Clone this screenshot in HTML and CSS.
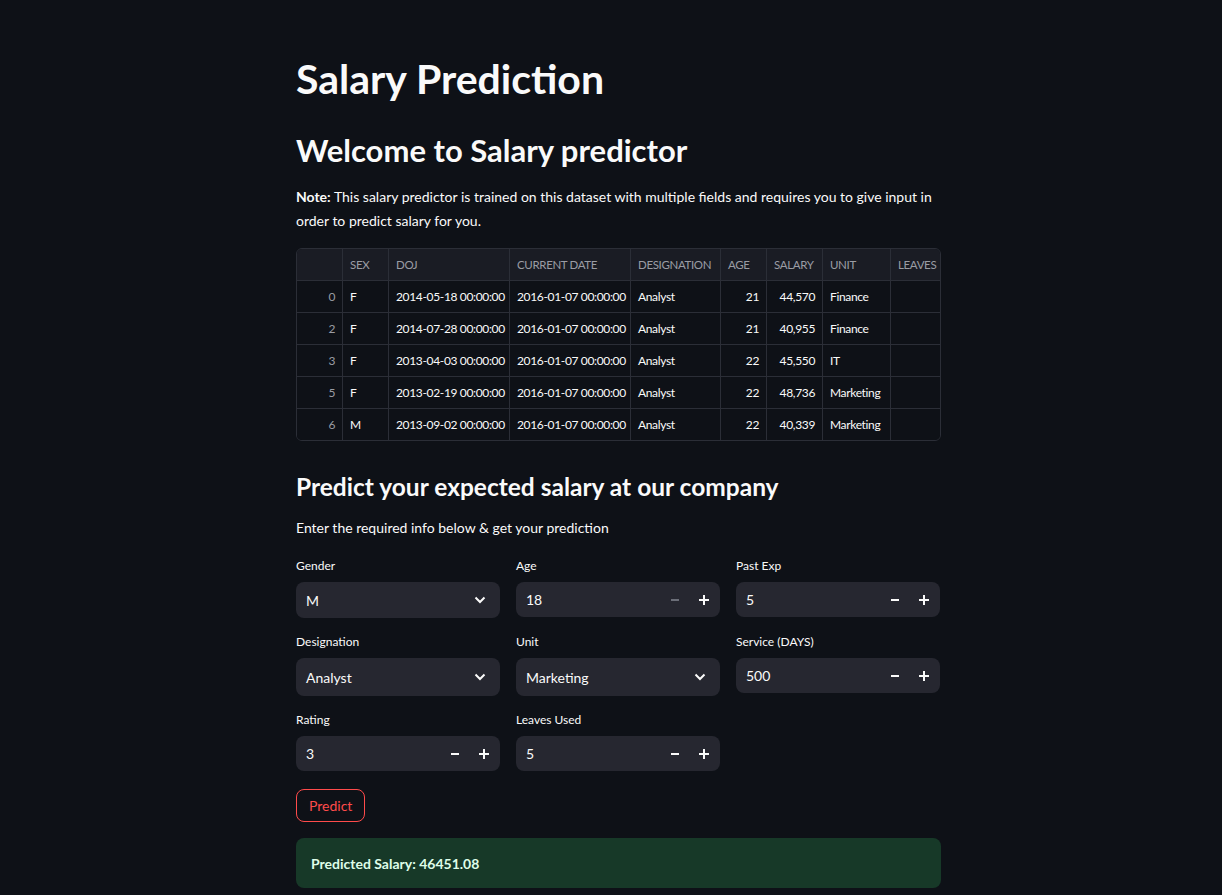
FILE: index.html
```html
<!DOCTYPE html>
<html lang="en">
<head>
<meta charset="utf-8">
<title>Salary Prediction</title>
<link rel="stylesheet" href="styles.css">
</head>
<body>
<main class="page">
  <h1 class="title">Salary Prediction</h1>
  <h2 class="subtitle">Welcome to Salary predictor</h2>
  <p class="note"><strong>Note:</strong> This salary predictor is trained on this dataset with multiple fields and requires you to give input in order to predict salary for you.</p>

  <div class="table">
    <div class="row head">
      <div class="cell"></div>
      <div class="cell">SEX</div>
      <div class="cell">DOJ</div>
      <div class="cell">CURRENT DATE</div>
      <div class="cell">DESIGNATION</div>
      <div class="cell">AGE</div>
      <div class="cell">SALARY</div>
      <div class="cell">UNIT</div>
      <div class="cell">LEAVES</div>
    </div>
    <div class="row">
      <div class="cell idx">0</div><div class="cell">F</div><div class="cell">2014-05-18 00:00:00</div><div class="cell">2016-01-07 00:00:00</div><div class="cell">Analyst</div><div class="cell num">21</div><div class="cell num">44,570</div><div class="cell">Finance</div><div class="cell"></div>
    </div>
    <div class="row">
      <div class="cell idx">2</div><div class="cell">F</div><div class="cell">2014-07-28 00:00:00</div><div class="cell">2016-01-07 00:00:00</div><div class="cell">Analyst</div><div class="cell num">21</div><div class="cell num">40,955</div><div class="cell">Finance</div><div class="cell"></div>
    </div>
    <div class="row">
      <div class="cell idx">3</div><div class="cell">F</div><div class="cell">2013-04-03 00:00:00</div><div class="cell">2016-01-07 00:00:00</div><div class="cell">Analyst</div><div class="cell num">22</div><div class="cell num">45,550</div><div class="cell">IT</div><div class="cell"></div>
    </div>
    <div class="row">
      <div class="cell idx">5</div><div class="cell">F</div><div class="cell">2013-02-19 00:00:00</div><div class="cell">2016-01-07 00:00:00</div><div class="cell">Analyst</div><div class="cell num">22</div><div class="cell num">48,736</div><div class="cell">Marketing</div><div class="cell"></div>
    </div>
    <div class="row last">
      <div class="cell idx">6</div><div class="cell">M</div><div class="cell">2013-09-02 00:00:00</div><div class="cell">2016-01-07 00:00:00</div><div class="cell">Analyst</div><div class="cell num">22</div><div class="cell num">40,339</div><div class="cell">Marketing</div><div class="cell"></div>
    </div>
  </div>

  <h3 class="section">Predict your expected salary at our company</h3>
  <p class="lead">Enter the required info below &amp; get your prediction</p>

  <div class="form">
    <div class="field">
      <label class="label">Gender</label>
      <div class="control select"><span class="value">M</span>
        <svg class="chev" viewBox="0 0 12 8" width="12" height="8"><path d="M1.5 1.5 L6 6 L10.5 1.5" fill="none" stroke="#fafafa" stroke-width="2"/></svg></div>
    </div>
    <div class="field">
      <label class="label">Age</label>
      <div class="control number"><span class="value">18</span>
        <span class="step dim"><svg viewBox="0 0 10 10" width="10" height="10"><rect x="1" y="4" width="8" height="2" fill="currentColor"/></svg></span>
        <span class="step"><svg viewBox="0 0 10 10" width="10" height="10"><rect x="0" y="4" width="10" height="2" fill="currentColor"/><rect x="4" y="0" width="2" height="10" fill="currentColor"/></svg></span></div>
    </div>
    <div class="field">
      <label class="label">Past Exp</label>
      <div class="control number"><span class="value">5</span>
        <span class="step"><svg viewBox="0 0 10 10" width="10" height="10"><rect x="1" y="4" width="8" height="2" fill="currentColor"/></svg></span>
        <span class="step"><svg viewBox="0 0 10 10" width="10" height="10"><rect x="0" y="4" width="10" height="2" fill="currentColor"/><rect x="4" y="0" width="2" height="10" fill="currentColor"/></svg></span></div>
    </div>

    <div class="field">
      <label class="label">Designation</label>
      <div class="control select tall"><span class="value">Analyst</span>
        <svg class="chev" viewBox="0 0 12 8" width="12" height="8"><path d="M1.5 1.5 L6 6 L10.5 1.5" fill="none" stroke="#fafafa" stroke-width="2"/></svg></div>
    </div>
    <div class="field">
      <label class="label">Unit</label>
      <div class="control select tall"><span class="value">Marketing</span>
        <svg class="chev" viewBox="0 0 12 8" width="12" height="8"><path d="M1.5 1.5 L6 6 L10.5 1.5" fill="none" stroke="#fafafa" stroke-width="2"/></svg></div>
    </div>
    <div class="field">
      <label class="label">Service (DAYS)</label>
      <div class="control number"><span class="value">500</span>
        <span class="step"><svg viewBox="0 0 10 10" width="10" height="10"><rect x="1" y="4" width="8" height="2" fill="currentColor"/></svg></span>
        <span class="step"><svg viewBox="0 0 10 10" width="10" height="10"><rect x="0" y="4" width="10" height="2" fill="currentColor"/><rect x="4" y="0" width="2" height="10" fill="currentColor"/></svg></span></div>
    </div>

    <div class="field">
      <label class="label">Rating</label>
      <div class="control number"><span class="value">3</span>
        <span class="step"><svg viewBox="0 0 10 10" width="10" height="10"><rect x="1" y="4" width="8" height="2" fill="currentColor"/></svg></span>
        <span class="step"><svg viewBox="0 0 10 10" width="10" height="10"><rect x="0" y="4" width="10" height="2" fill="currentColor"/><rect x="4" y="0" width="2" height="10" fill="currentColor"/></svg></span></div>
    </div>
    <div class="field">
      <label class="label">Leaves Used</label>
      <div class="control number"><span class="value">5</span>
        <span class="step"><svg viewBox="0 0 10 10" width="10" height="10"><rect x="1" y="4" width="8" height="2" fill="currentColor"/></svg></span>
        <span class="step"><svg viewBox="0 0 10 10" width="10" height="10"><rect x="0" y="4" width="10" height="2" fill="currentColor"/><rect x="4" y="0" width="2" height="10" fill="currentColor"/></svg></span></div>
    </div>
  </div>

  <button class="btn">Predict</button>

  <div class="success">Predicted Salary: 46451.08</div>
</main>
</body>
</html>
```

FILE: styles.css
```css
* { box-sizing: border-box; }

html, body {
  margin: 0;
  padding: 0;
  background: #0e1117;
  color: #fafafa;
  font-family: Lato, "Noto Sans", "Liberation Sans", sans-serif;
  height: 100%;
  overflow: hidden;
}

.page {
  width: 645px;
  margin-left: 296px;
  padding-top: 52px;
}

.title {
  margin: 0;
  font-size: 41px;
  font-weight: 700;
  line-height: 53px;
}

.subtitle {
  margin: 24px 0 0;
  font-size: 31px;
  font-weight: 700;
  line-height: 43px;
}

.note {
  margin: 13px 0 0;
  font-size: 14px;
  line-height: 24px;
}

.note strong { font-weight: 700; }

.table {
  margin-top: 15px;
  width: 645px;
  height: 193px;
  border: 1px solid #2b2e37;
  border-radius: 6px;
  overflow: hidden;
  font-size: 12px;
  letter-spacing: -0.35px;
}

.row {
  display: grid;
  grid-template-columns: 46px 46px 121px 121px 90px 46px 56px 68px 120px;
  height: 32px;
  border-bottom: 1px solid #2b2e37;
  background: #0e1117;
}

.row.last { border-bottom: 0; height: 31px; }

.row.head {
  background: #1a1c24;
  color: #9a9ca4;
  font-size: 11.5px;
}

.cell {
  display: flex;
  align-items: center;
  padding: 0 7px;
  border-right: 1px solid #2b2e37;
  white-space: nowrap;
  overflow: hidden;
}

.cell:last-child { border-right: 0; }

.cell.idx {
  justify-content: flex-end;
  color: #9a9ca4;
  background: #0e1117;
}

.cell.num { justify-content: flex-end; }

.section {
  margin: 29px 0 0;
  font-size: 24.5px;
  font-weight: 700;
  line-height: 34px;
}

.lead {
  margin: 12px 0 0;
  font-size: 14px;
  line-height: 24px;
}

.form {
  margin-top: 16px;
  display: grid;
  grid-template-columns: repeat(3, 1fr);
  column-gap: 16px;
  row-gap: 14px;
  width: 644px;
}

.field { display: flex; flex-direction: column; }

.label {
  font-size: 12px;
  line-height: 20px;
  margin-bottom: 6px;
}

.control {
  background: #262730;
  border-radius: 8px;
  height: 35px;
  display: flex;
  align-items: center;
  font-size: 14px;
}

.control .value { flex: 1; padding-left: 10px; }

.select { height: 36px; }
.select.tall { height: 38px; }

.chev { margin-right: 14px; }

.number { padding-right: 2px; }

.step {
  width: 29px;
  height: 100%;
  display: flex;
  align-items: center;
  justify-content: center;
  color: #fafafa;
}

.step.dim { color: #6b6e78; }

.btn {
  display: block;
  margin-top: 18px;
  height: 33px;
  padding: 0 12px;
  background: transparent;
  border: 1px solid #ff4b4b;
  border-radius: 8px;
  color: #ff4b4b;
  font-family: inherit;
  font-size: 14px;
}

.success {
  margin-top: 16px;
  height: 50px;
  background: #173928;
  border-radius: 8px;
  padding: 0 15px;
  display: flex;
  align-items: center;
  color: #dffde9;
  font-weight: 700;
  font-size: 14px;
}
```
